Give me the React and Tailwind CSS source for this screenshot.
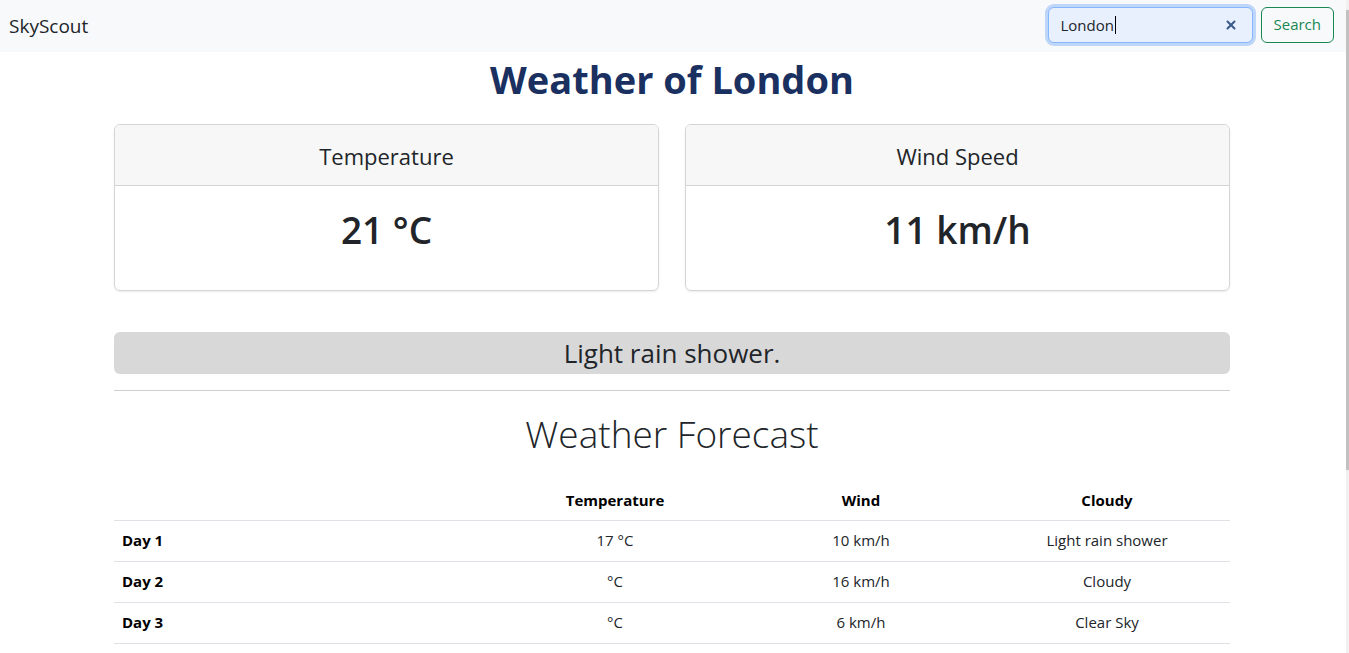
import { X } from "lucide-react";

const forecast = [
  { day: "Day 1", temp: "17 °C", wind: "10 km/h", sky: "Light rain shower" },
  { day: "Day 2", temp: "°C", wind: "16 km/h", sky: "Cloudy" },
  { day: "Day 3", temp: "°C", wind: "6 km/h", sky: "Clear Sky" },
];

function StatCard({ title, value }) {
  return (
    <div className="flex-1 overflow-hidden rounded-md border border-[#d5d5d5] shadow-[0_1px_2px_rgba(0,0,0,0.08)]">
      <div className="flex h-[61px] items-center justify-center border-b border-[#d5d5d5] bg-[#f7f7f7] pt-[2px] text-[22px] text-[#212529]">
        {title}
      </div>
      <div className="flex h-[104px] items-start justify-center pt-[16px] text-[37px] font-semibold text-[#212529]">
        {value}
      </div>
    </div>
  );
}

export default function App() {
  return (
    <div
      className="flex min-h-[653px] bg-white text-[#212529]"
      style={{ fontFamily: "'Open Sans', 'Noto Sans', sans-serif" }}
    >
      <div className="flex-1">
        <nav className="flex h-[52px] items-center justify-between bg-[#f8f9fa] pl-[9px] pr-[12px]">
          <span className="text-[19px] text-[#212529]">SkyScout</span>
          <div className="mb-[3px] flex items-center gap-[8px]">
            <div className="flex h-[36px] w-[205px] items-center justify-between rounded-md border border-[#86b7fe] bg-[#e8f0fe] pl-[12px] pr-[14px] shadow-[0_0_0_3px_rgba(13,110,253,0.25)]">
              <span className="text-[15px] text-[#212529]">
                London<span className="ml-[1px] inline-block h-[18px] w-px translate-y-[3px] bg-black" />
              </span>
              <X size={14} strokeWidth={3.5} className="text-[#3b5a8a]" />
            </div>
            <button className="h-[36px] rounded-md border border-[#198754] px-[12px] text-[15px] text-[#198754]">
              Search
            </button>
          </div>
        </nav>

        <main className="ml-[114px] w-[1116px]">
          <h1 className="mt-[2px] text-center text-[38px] font-bold leading-[50px] text-[#1a3060]">
            Weather of London
          </h1>

          <div className="mt-[20px] flex gap-[26px]">
            <StatCard title="Temperature" value="21 °C" />
            <StatCard title="Wind Speed" value="11 km/h" />
          </div>

          <div className="mt-[41px] flex h-[42px] items-center justify-center rounded-md bg-[#d9d8d9] text-[26px] text-[#212529]">
            Light rain shower.
          </div>

          <hr className="mt-[16px] border-t border-[#cfcfcf]" />

          <h2 className="mt-[17px] text-center text-[37px] font-light leading-[52px] text-[#212529]">
            Weather Forecast
          </h2>

          <table className="mt-[20px] w-full border-collapse text-[15px]">
            <thead>
              <tr className="h-[40px] border-b border-[#dee2e6]">
                <th className="w-[378px]" />
                <th className="w-[246px] text-center font-bold text-black">Temperature</th>
                <th className="w-[246px] text-center font-bold text-black">Wind</th>
                <th className="w-[246px] text-center font-bold text-black">Cloudy</th>
              </tr>
            </thead>
            <tbody>
              {forecast.map((row) => (
                <tr key={row.day} className="h-[41px] border-b border-[#dee2e6]">
                  <td className="px-[8px] font-bold text-black">{row.day}</td>
                  <td className="text-center">{row.temp}</td>
                  <td className="text-center">{row.wind}</td>
                  <td className="text-center">{row.sky}</td>
                </tr>
              ))}
            </tbody>
          </table>
        </main>
      </div>

      <div className="flex w-[3px] flex-col bg-[#f1f1f1] pt-[10px]">
        <div className="h-[460px] w-full bg-[#c1c1c1]" />
      </div>
    </div>
  );
}
